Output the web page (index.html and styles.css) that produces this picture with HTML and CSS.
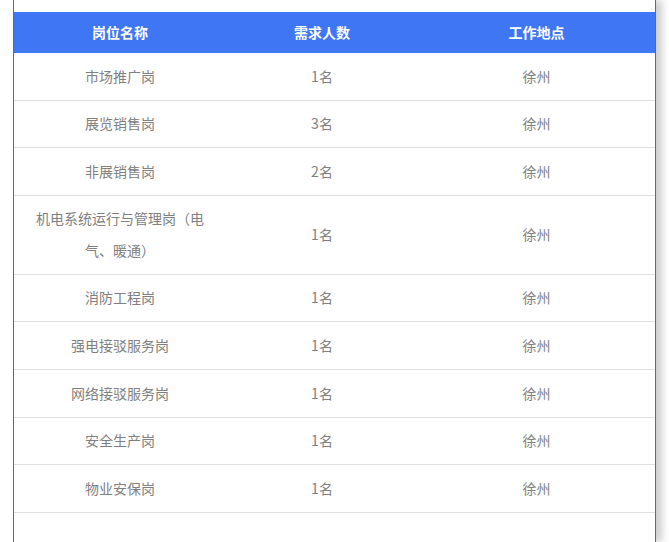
FILE: index.html
```html
<!DOCTYPE html>
<html lang="zh-CN">
<head>
<meta charset="utf-8">
<title>岗位需求</title>
<link rel="stylesheet" href="styles.css">
</head>
<body>
<div class="panel">
  <table class="jobs">
    <colgroup>
      <col class="c-name">
      <col class="c-count">
      <col class="c-place">
    </colgroup>
    <thead>
      <tr><th>岗位名称</th><th>需求人数</th><th>工作地点</th></tr>
    </thead>
    <tbody>
      <tr><td>市场推广岗</td><td>1名</td><td>徐州</td></tr>
      <tr><td>展览销售岗</td><td>3名</td><td>徐州</td></tr>
      <tr><td>非展销售岗</td><td>2名</td><td>徐州</td></tr>
      <tr><td>机电系统运行与管理岗（电气、暖通）</td><td>1名</td><td>徐州</td></tr>
      <tr><td>消防工程岗</td><td>1名</td><td>徐州</td></tr>
      <tr><td>强电接驳服务岗</td><td>1名</td><td>徐州</td></tr>
      <tr><td>网络接驳服务岗</td><td>1名</td><td>徐州</td></tr>
      <tr><td>安全生产岗</td><td>1名</td><td>徐州</td></tr>
      <tr><td>物业安保岗</td><td>1名</td><td>徐州</td></tr>
    </tbody>
  </table>
</div>
</body>
</html>
```
FILE: styles.css
```css
html, body {
  margin: 0;
  padding: 0;
  height: 100%;
  background: #ffffff;
  overflow: hidden;
}
body {
  font-family: "Noto Sans CJK SC", "Noto Sans", sans-serif;
  font-size: 14px;
}
.panel {
  box-sizing: border-box;
  margin-left: 13px;
  width: 643px;
  height: 100%;
  padding-top: 12px;
  border-left: 1px solid #3a6cc8;
  border-right: 1px solid #3a6cc8;
  background: #ffffff;
  box-shadow: 6px 0 8px rgba(0, 0, 0, 0.2);
}
.jobs {
  width: 641px;
  border-collapse: collapse;
  table-layout: fixed;
}
.c-name { width: 212px; }
.c-count { width: 192px; }
.c-place { width: 237px; }
.jobs th {
  background: #3f76f3;
  color: #ffffff;
  font-weight: bold;
  height: 41px;
  line-height: 41px;
  padding: 0;
  text-align: center;
}
.jobs td {
  color: #808080;
  text-align: center;
  padding: 7.6px 20px;
  line-height: 31.4px;
  border-bottom: 1px solid #e0e0e0;
  vertical-align: middle;
}
```
